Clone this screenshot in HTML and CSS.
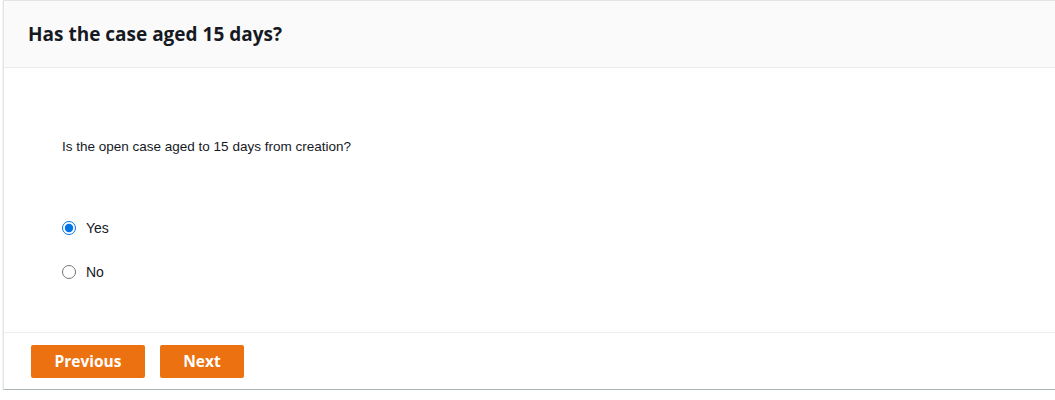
FILE: index.html
```html
<!DOCTYPE html>
<html lang="en">
<head>
    <meta charset="UTF-8">
    <meta name="viewport" content="width=device-width, initial-scale=1.0">
    <title>Has the case aged 15 days?</title>
    <link rel="stylesheet" href="styles.css">
</head>
<body>
    <div class="card">
        <div class="card-header">
            <h2>Has the case aged 15 days?</h2>
        </div>
        <div class="card-body">
            <p class="question">Is the open case aged to 15 days from creation?</p>
            <div class="options">
                <label class="option">
                    <input type="radio" name="aged" value="yes" checked>
                    <span>Yes</span>
                </label>
                <label class="option">
                    <input type="radio" name="aged" value="no">
                    <span>No</span>
                </label>
            </div>
        </div>
        <div class="card-footer">
            <button type="button" class="btn btn-prev">Previous</button>
            <button type="button" class="btn btn-next">Next</button>
        </div>
    </div>
</body>
</html>
```

FILE: styles.css
```css
body {
    margin: 0;
    padding: 0 0 0 3px;
    background-color: #ffffff;
    font-family: Arial, "Liberation Sans", sans-serif;
    overflow: hidden;
}
.card {
    background: #ffffff;
    border: 1px solid #e4e6e6;
    border-right: none;
    border-bottom: 1px solid #aab7b8;
    box-shadow: 0 1px 1px rgba(0, 28, 36, 0.3);
    height: 390px;
    box-sizing: border-box;
    display: flex;
    flex-direction: column;
}
.card-header {
    background-color: #fafafa;
    border-bottom: 1px solid #eaeded;
    height: 67px;
    box-sizing: border-box;
    display: flex;
    align-items: center;
    padding: 0 24px;
}
.card-header h2 {
    margin: 0;
    font-family: "Open Sans", sans-serif;
    font-size: 19px;
    font-weight: 700;
    color: #16191f;
}
.card-body {
    flex: 1;
    padding: 70px 58px 0;
}
.question {
    margin: 0;
    font-size: 13.5px;
    color: #16191f;
    line-height: 18px;
}
.options {
    margin-top: 62px;
    display: flex;
    flex-direction: column;
    gap: 24px;
}
.option {
    display: flex;
    align-items: center;
    font-size: 14px;
    color: #16191f;
    line-height: 20px;
}
.option input {
    margin: 0 10px 0 0;
    width: 14px;
    height: 14px;
    accent-color: #0073e6;
}
.card-footer {
    border-top: 1px solid #eaeded;
    height: 57px;
    box-sizing: border-box;
    display: flex;
    align-items: center;
    padding: 0 27px;
    gap: 15px;
}
.btn {
    font-family: "Open Sans", sans-serif;
    font-size: 15.5px;
    font-weight: 700;
    color: #ffffff;
    background-color: #ec7211;
    border: none;
    border-radius: 2px;
    height: 33px;
    padding: 0;
    cursor: pointer;
}
.btn-prev {
    width: 114px;
}
.btn-next {
    width: 84px;
}
.btn:hover {
    background-color: #eb5f07;
}
```
